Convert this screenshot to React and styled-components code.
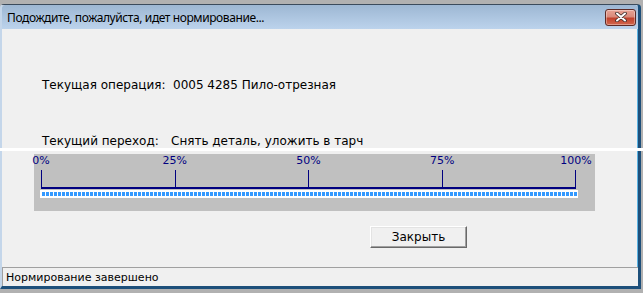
import React from "react";
import styled, { createGlobalStyle } from "styled-components";

const Global = createGlobalStyle`
  html, body { margin: 0; padding: 0; background: #b4b4b4; }
  body { font-family: "DejaVu Sans", "Liberation Sans", sans-serif; }
`;

const Screen = styled.div`
  position: relative;
  width: 643px;
  height: 293px;
  background: #b1b1b1;
  overflow: hidden;
  padding-top: 4px;
  box-sizing: border-box;
`;

const Window = styled.div`
  width: 641px;
  height: 285px;
  box-sizing: border-box;
  display: flex;
  flex-direction: column;
  background: #f0f0f0;
  border-top: 1px solid #3b4b5c;
  border-left: 2px solid #c4d6ea;
  border-right: 3px solid #1d4f7a;
  border-bottom: 3px solid #1d4f7a;
  border-top-left-radius: 4px;
  border-top-right-radius: 4px;
  box-shadow: inset -1px -1px 0 #5ab3e3;
`;

const TitleBar = styled.div`
  height: 24px;
  flex: none;
  display: flex;
  align-items: center;
  justify-content: space-between;
  padding: 0 2px 0 5px;
  background: linear-gradient(#9db7d3, #bcd3ec);
  border-top-left-radius: 3px;
  border-top-right-radius: 3px;
`;

const Title = styled.span`
  font-family: "Noto Sans", "Open Sans", sans-serif;
  font-size: 12px;
  color: #000;
  letter-spacing: -0.4px;
`;

const CloseButton = styled.div`
  width: 29px;
  height: 15px;
  border: 1px solid #5e2a25;
  border-radius: 3px;
  background: linear-gradient(#e8a294 0%, #d98a7b 45%, #c1422d 55%, #d2674e 100%);
  display: flex;
  align-items: center;
  justify-content: center;
  box-shadow: inset 0 0 0 1px rgba(255, 255, 255, 0.35);
`;

const Body = styled.div`
  flex: 1;
  display: flex;
  flex-direction: column;
  align-items: flex-start;
`;

const InfoRow = styled.div`
  display: flex;
  margin-top: ${(p) => p.$top}px;
  margin-left: 40px;
  font-size: 12px;
  line-height: 14px;
  color: #000;
  white-space: nowrap;
`;

const Label = styled.span`
  width: ${(p) => p.$w}px;
  flex: none;
`;

const Panel = styled.div`
  margin-top: 6px;
  margin-left: 32px;
  width: 561px;
  height: 57px;
  background: #c0c0c0;
  display: flex;
  flex-direction: column;
`;

const ScaleLabels = styled.div`
  position: relative;
  height: 13px;
  margin: 0 19px 0 7px;
`;

const Pct = styled.span`
  position: absolute;
  top: 0;
  left: ${(p) => p.$pos}%;
  transform: translateX(-50%);
  font-size: 11px;
  line-height: 13px;
  color: #000080;
`;

const Ticks = styled.div`
  margin: 3px 0 0 7px;
  width: 535px;
  height: 17px;
  display: flex;
  border-bottom: 2px solid #000080;
`;

const TickSeg = styled.div`
  flex: 1;
  border-left: 1px solid #000080;
  &:last-child { border-right: 1px solid #000080; }
`;

const Bar = styled.div`
  margin: 1px 0 0 6px;
  width: 538px;
  height: 8px;
  box-sizing: border-box;
  background: #fff;
  padding: 2px 2px;
  display: flex;
  gap: 1px;
  overflow: hidden;
`;

const Block = styled.div`
  flex: none;
  width: 3px;
  height: 4px;
  background: #3399ff;
`;

const Button = styled.div`
  margin-top: 15px;
  margin-left: 368px;
  width: 97px;
  height: 22px;
  box-sizing: border-box;
  display: flex;
  align-items: center;
  justify-content: center;
  font-size: 12px;
  color: #000;
  background: #f0f0f0;
  border-top: 1px solid #fff;
  border-left: 1px solid #fff;
  border-right: 1px solid #696969;
  border-bottom: 1px solid #696969;
  box-shadow: inset -1px -1px 0 #a0a0a0, inset 1px 1px 0 #e3e3e3;
`;

const StatusBar = styled.div`
  flex: none;
  height: 19px;
  box-sizing: border-box;
  border-top: 1px solid #a0a0a0;
  border-left: 1px solid #a0a0a0;
  display: flex;
  align-items: center;
  padding-left: 3px;
  font-size: 11px;
  color: #000;
  background: #f0f0f0;
  white-space: nowrap;
`;

const Glitch = styled.div`
  position: absolute;
  left: 0;
  right: 0;
  top: 148px;
  height: 3px;
  background: #fff;
`;

const CloseIcon = () => (
  <svg width="14" height="10" viewBox="0 0 14 10">
    <path d="M3 1.5 L11 8.5 M11 1.5 L3 8.5" stroke="#3a2a28" strokeWidth="3.6" strokeLinecap="round" />
    <path d="M3 1.5 L11 8.5 M11 1.5 L3 8.5" stroke="#fff" strokeWidth="2" strokeLinecap="round" />
  </svg>
);

export default function App() {
  const marks = [0, 25, 50, 75, 100];
  const blocks = Array.from({ length: 134 });
  return (
    <>
      <Global />
      <Screen>
        <Window>
          <TitleBar>
            <Title>Подождите, пожалуйста, идет нормирование...</Title>
            <CloseButton>
              <CloseIcon />
            </CloseButton>
          </TitleBar>
          <Body>
            <InfoRow $top={49}>
              <Label $w={131}>Текущая операция:</Label>
              <span>0005 4285 Пило-отрезная</span>
            </InfoRow>
            <InfoRow $top={42}>
              <Label $w={129}>Текущий переход:</Label>
              <span>Снять деталь, уложить в тарч</span>
            </InfoRow>
            <Panel>
              <ScaleLabels>
                {marks.map((m) => (
                  <Pct key={m} $pos={m}>
                    {m}%
                  </Pct>
                ))}
              </ScaleLabels>
              <Ticks>
                <TickSeg />
                <TickSeg />
                <TickSeg />
                <TickSeg />
              </Ticks>
              <Bar>
                {blocks.map((_, i) => (
                  <Block key={i} />
                ))}
              </Bar>
            </Panel>
            <Button>Закрыть</Button>
          </Body>
          <StatusBar>Нормирование завершено</StatusBar>
        </Window>
        <Glitch />
      </Screen>
    </>
  );
}
